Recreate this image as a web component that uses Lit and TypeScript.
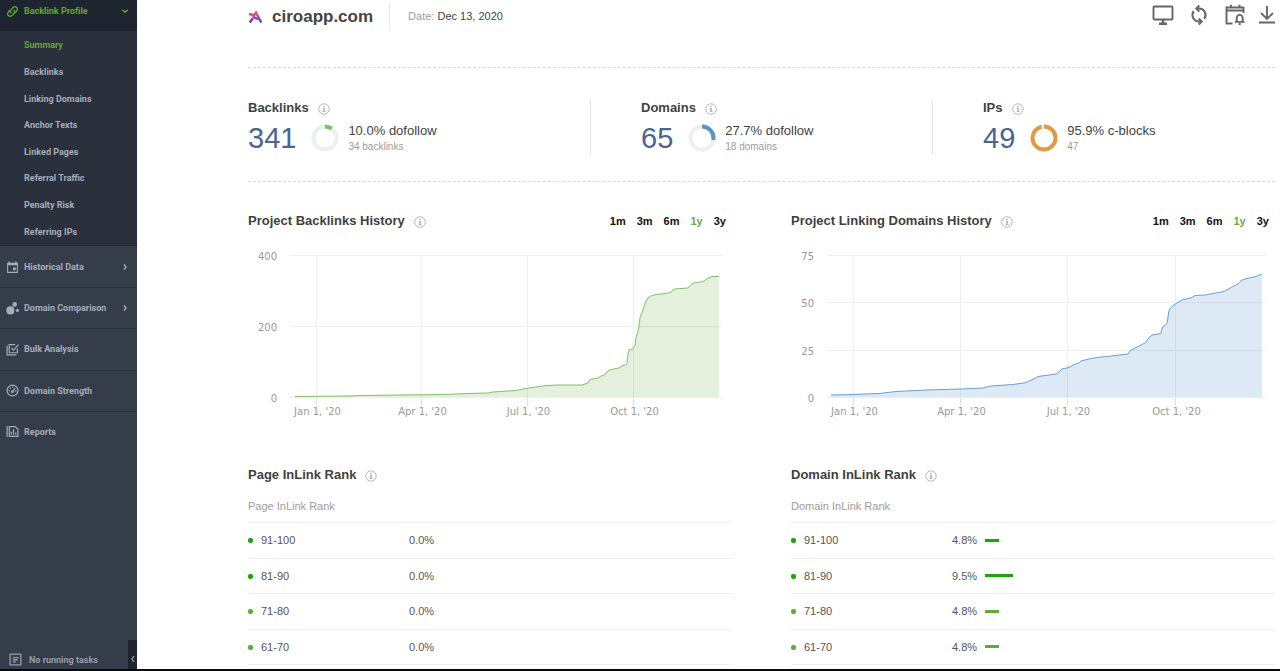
import { LitElement, html, svg, css } from "lit";
import { customElement, property, state } from "lit/decorators.js";
import { classMap } from "lit/directives/class-map.js";

const icons: Record<string, unknown> = {
  link: svg`<g fill="none" stroke="currentColor" stroke-width="2.400" stroke-linecap="round"><path d="M9.500 14.500c-2-2-1.500-4.500 0-6l3.500-4a4.600 4.600 0 0 1 6.600 0 4.600 4.600 0 0 1 0 6.600l-2.500 2.700"/><path d="M14.500 9.500c2 2 1.500 4.500 0 6l-3.500 4a4.600 4.600 0 0 1-6.600 0 4.600 4.600 0 0 1 0-6.600l2.500-2.700"/></g>`,
  calendar: svg`<path fill="currentColor" d="M18 12h-5v5h5v-5zM17 1v2H7V1H4.500v2H2v19h20V3h-2.500V1H17zm3 19H4V8h16v12z"/>`,
  bubbles: svg`<g fill="currentColor"><circle cx="8" cy="15.500" r="7.500"/><circle cx="16" cy="4.500" r="4.300"/><circle cx="21" cy="15.500" r="2.900"/></g>`,
  bulk: svg`<g fill="none" stroke="currentColor" stroke-width="2.200"><path d="M2 5v17h17"/><path d="M21 10v8H6V3h11"/><path d="M10 9l4 4 9-10"/></g>`,
  gauge: svg`<g fill="none" stroke="currentColor" stroke-width="2.200"><circle cx="12" cy="12" r="10"/><path d="M12 14l5-6"/></g><g fill="currentColor"><circle cx="11.500" cy="14.500" r="2.600"/><circle cx="6" cy="12" r="1.400"/><circle cx="8" cy="7.500" r="1.400"/><circle cx="12.500" cy="5.800" r="1.400"/><circle cx="18" cy="13" r="1.400"/></g>`,
  reports: svg`<g fill="none" stroke="currentColor" stroke-width="2.200"><path d="M2 2v20"/><path d="M6 3h11l5 5v13H6z"/><path d="M10 18v-6M14 18V8M18 18v-4"/></g>`,
  tasks: svg`<g fill="none" stroke="currentColor" stroke-width="2.400"><rect x="2" y="2" width="20" height="20" rx="1"/><path d="M7 8.500h11M7 12.500h9M7 16.500h6"/></g>`,
  down: svg`<path d="M4 9l8 6 8-6" fill="none" stroke="currentColor" stroke-width="4.500"/>`,
  right: svg`<path d="M9 4l6 8-6 8" fill="none" stroke="currentColor" stroke-width="4.500"/>`,
  left: svg`<path d="M15 3l-6 9 6 9" fill="none" stroke="currentColor" stroke-width="3.500"/>`,
  info: svg`<circle cx="12" cy="12" r="10.500" fill="none" stroke="currentColor" stroke-width="1.800"/><path fill="currentColor" d="M10.500 5.500h3v3h-3zM9.500 10h4.200v6h1.300v2H9.500v-2h1.200v-4H9.500z"/>`,
  monitor: svg`<g fill="none" stroke="currentColor" stroke-width="1.900"><rect x="2.500" y="3.500" width="19" height="13" rx="1"/><path d="M12 17v3.500M8 20.700h8" stroke-width="2.400"/></g>`,
  sync: svg`<g fill="none" stroke="currentColor" stroke-width="2"><path d="M9.500 5.500H12a6.500 6.500 0 0 1 5.300 10.300M18.500 12v0"/><path d="M14.500 18.500H12A6.500 6.500 0 0 1 6.700 8.200"/><path d="M12.300 2.500L9.300 5.500l3 3M11.700 15.500l3 3-3 3"/></g>`,
  schedule: svg`<g fill="none" stroke="currentColor" stroke-width="1.900"><path d="M9.500 20.500H3.500V4.500h17v5.500M3.500 7.500H20.500M8 1.800v3M16.500 1.800v3"/><path d="M13.700 18.700v-3.500a3 3.300 0 0 1 6 0v3.500M12 18.900h9.500M16.700 11v1.200M15.700 21h2"/></g>`,
  download: svg`<g fill="none" stroke="currentColor" stroke-width="1.900"><path d="M12 3v12.500M6 10l6 6 6-6M4 19.500h16"/></g>`,
};

const icon = (name: string, cls = "icon", box = "0 0 24 24") =>
  html`<svg class=${cls} viewBox=${box} aria-hidden="true">${icons[name]}</svg>`;

const infoButton = () =>
  html`<button class="info" type="button" aria-label="More information">${icon("info")}</button>`;

const shared = css`
  * { box-sizing: border-box; }
  svg { display: block; }
  h1, h2, p, ul { margin: 0; padding: 0; }
  ul { list-style: none; }
  button { padding: 0; border: 0; background: none; color: inherit; font: inherit; cursor: pointer; }
  a { color: inherit; text-decoration: none; }
  h2 { font-size: 13px; line-height: 16px; font-weight: 700; color: #3f3f3f; }
  .heading { display: flex; align-items: center; gap: 9px; }
  .info { color: #b3b3b3; }
  .info .icon { width: 12px; height: 12px; margin-top: 1px; }
`;

@customElement("side-nav")
class SideNav extends LitElement {
  static styles = [shared, css`
    :host {
      display: flex; flex-direction: column; background: #363d4a; color: #a4adbb;
      font: 700 9px/12px Roboto, "Liberation Sans", sans-serif;
    }
    .icon { width: 13px; height: 13px; }
    .arrow { width: 8px; height: 8px; margin-left: auto; }
    .profile { display: flex; height: 31px; padding: 0 8px 9px 6px; align-items: center; gap: 5px; background: #1f2530; color: #62a830; text-align: left; }
    .pages { display: grid; grid-auto-rows: 1fr; align-items: center; height: 215px; padding: 1px 0 0 24px; background: #2a303c; border-bottom: 1px dotted #1f2530; }
    .current { color: #62a830; }
    .sections { display: grid; grid-auto-rows: 1fr; height: 206px; }
    .sections li { border-top: 1px solid #2b323e; display: grid; }
    .sections li:first-child { border-top-color: #363d4a; }
    .section { display: flex; align-items: center; gap: 5px; padding: 0 8px 0 6px; }
    .footer { display: flex; justify-content: space-between; margin-top: auto; }
    .status { display: flex; align-items: center; gap: 7px; padding: 10px 0 0 9px; color: #939cab; }
    .collapse { display: grid; place-items: center; width: 9px; height: 29px; padding-top: 8px; background: #1f2530; }
    .collapse .icon { width: 8px; height: 8px; }
  `];

  render() {
    const pages = ["Summary", "Backlinks", "Linking Domains", "Anchor Texts", "Linked Pages", "Referral Traffic", "Penalty Risk", "Referring IPs"];
    const sections: [string, string, boolean][] = [
      ["calendar", "Historical Data", true],
      ["bubbles", "Domain Comparison", true],
      ["bulk", "Bulk Analysis", false],
      ["gauge", "Domain Strength", false],
      ["reports", "Reports", false],
    ];
    return html`
      <button class="profile" type="button" aria-expanded="true">
        ${icon("link")}<span>Backlink Profile</span>${icon("down", "arrow")}
      </button>
      <ul class="pages">
        ${pages.map((p, i) => html`<li><a href="#" class=${classMap({ current: i === 0 })}>${p}</a></li>`)}
      </ul>
      <ul class="sections">
        ${sections.map(([ic, label, more]) => html`
          <li><a class="section" href="#">${icon(ic)}<span>${label}</span>${more ? icon("right", "arrow") : ""}</a></li>`)}
      </ul>
      <div class="footer">
        <div class="status">${icon("tasks")}<span>No running tasks</span></div>
        <button class="collapse" type="button" aria-label="Collapse menu">${icon("left")}</button>
      </div>`;
  }
}

@customElement("stat-card")
class StatCard extends LitElement {
  @property() label = "";
  @property() value = "";
  @property({ type: Number }) percent = 0;
  @property() kind = "";
  @property() detail = "";
  @property() color = "";

  static styles = [shared, css`
    :host { display: block; }
    .body { display: flex; align-items: center; height: 36px; margin-top: 4px; }
    .value { font-size: 29px; line-height: 34px; color: #4a6591; }
    .ring { width: 28px; height: 28px; margin: 0 9px 0 15px; }
    .kind { font-size: 13px; line-height: 16px; color: #3f3f3f; }
    .detail { margin-top: 1px; font-size: 10px; line-height: 14px; color: #9c9c9c; }
  `];

  render() {
    const length = 2 * Math.PI * 11.5;
    return html`
      <div class="heading"><h2>${this.label}</h2>${infoButton()}</div>
      <div class="body">
        <span class="value">${this.value}</span>
        <svg class="ring" viewBox="0 0 28 28" fill="none" stroke-width="4" aria-hidden="true">
          <circle cx="14" cy="14" r="11.500" stroke="#edf0f0"/>
          <circle cx="14" cy="14" r="11.500" stroke=${this.color} transform="rotate(-90 14 14)"
            stroke-dasharray="${(length * this.percent) / 100} ${length}"/>
        </svg>
        <div>
          <p class="kind">${this.percent.toFixed(1)}% ${this.kind}</p>
          <p class="detail">${this.detail}</p>
        </div>
      </div>`;
  }
}

interface Series {
  title: string;
  ticks: number[];
  labelX: number;
  grid: [number, number];
  dates: number[];
  line: string;
  stroke: string;
  fill: string;
}

@customElement("history-chart")
class HistoryChart extends LitElement {
  @property({ attribute: false }) series!: Series;
  @state() private range = "1y";

  static styles = [shared, css`
    :host { display: block; min-width: 0; }
    .top { display: flex; justify-content: space-between; align-items: center; height: 20px; }
    .ranges { display: flex; gap: 11px; padding-right: 6px; font-size: 11px; line-height: 16px; font-weight: 700; color: #111; }
    .on { color: #6aa84a; }
    .chart { width: 100%; height: auto; margin-top: 13px; }
    text { font: 10px "DejaVu Sans", sans-serif; fill: #999; }
    .grid { stroke: #eee; }
    .tick { stroke: #d5e0f0; }
  `];

  render() {
    const s = this.series;
    const names = ["Jan 1, '20", "Apr 1, '20", "Jul 1, '20", "Oct 1, '20"];
    const points = s.line.split(" ");
    const first = points[0].split(",")[0];
    const last = points[points.length - 1].split(",")[0];
    const y = (i: number) => Math.round(11 + (i * 142) / (s.ticks.length - 1)) + 0.5;
    return html`
      <div class="top">
        <div class="heading"><h2>${s.title}</h2>${infoButton()}</div>
        <div class="ranges">
          ${["1m", "3m", "6m", "1y", "3y"].map((r) => html`
            <button type="button" class=${classMap({ on: r === this.range })} @click=${() => (this.range = r)}>${r}</button>`)}
        </div>
      </div>
      <svg class="chart" viewBox="0 0 484 176" role="img" aria-label=${s.title}>
        ${s.ticks.map((t, i) => svg`
          <text x=${s.labelX} y=${y(i) + 4} text-anchor="end">${t}</text>
          <line class="grid" x1=${s.grid[0]} x2=${s.grid[1]} y1=${y(i)} y2=${y(i)}/>`)}
        ${s.dates.map((x, i) => svg`
          <line class="grid" x1=${x} x2=${x} y1="11" y2="153"/>
          <line class="tick" x1=${x} x2=${x} y1="154" y2="162"/>
          <text x=${x + 1} y="171" text-anchor="middle">${names[i]}</text>`)}
        <polygon points="${first},153 ${s.line} ${last},153" fill=${s.fill}/>
        <polyline points=${s.line} fill="none" stroke=${s.stroke}/>
      </svg>`;
  }
}

@customElement("rank-table")
class RankTable extends LitElement {
  @property() label = "";
  @property({ attribute: false }) values: number[] = [];

  static styles = [shared, css`
    :host { display: block; min-width: 0; }
    table { width: 100%; margin-top: 7px; border-collapse: collapse; table-layout: fixed; font-size: 11px; line-height: 14px; color: #555; }
    th { height: 32px; padding: 0; font-weight: 400; text-align: left; color: #9c9c9c; }
    td { height: 35px; padding: 0; }
    tr:nth-child(odd) td { height: 36px; }
    tr { border-bottom: 1px solid #efefef; }
    .range { width: 161px; }
    .cell { display: flex; align-items: center; gap: 8px; }
    .dot { width: 5px; height: 5px; margin-top: 1px; border-radius: 2px; background: currentColor; }
    .bar { height: 3px; background: currentColor; }
    .strong { color: #1fa30c; }
    .mild { color: #62ab33; }
  `];

  render() {
    const ranges = ["91-100", "81-90", "71-80", "61-70"];
    return html`
      <div class="heading"><h2>${this.label}</h2>${infoButton()}</div>
      <table>
        <colgroup><col class="range"><col></colgroup>
        <thead><tr><th colspan="2" scope="col">${this.label}</th></tr></thead>
        <tbody>
          ${ranges.map((r, i) => {
            const tone = i < 2 ? "strong" : "mild";
            const v = this.values[i];
            return html`<tr>
              <td><div class="cell"><span class="dot ${tone}"></span>${r}</div></td>
              <td><div class="cell">${v.toFixed(1)}%${v ? html`<span class="bar ${tone}" style="width:${Math.round(v * 2.9)}px"></span>` : ""}</div></td>
            </tr>`;
          })}
        </tbody>
      </table>`;
  }
}

const backlinks: Series = {
  title: "Project Backlinks History",
  ticks: [400, 200, 0],
  labelX: 29,
  grid: [42, 475],
  dates: [68.5, 173.5, 279.5, 385.5],
  line: "47,152.500 100,152 112,151.500 195,150.500 220,149.500 240,149 245,148 268,146.500 275,145 279,144.500 284,143.500 291,142.500 298,141.500 310,141 334,141 340,139 342,135.500 350,134 353,132 356,131.500 360,127 363,125.500 371,124 374,122 377,121 379,119.500 380,110 381,106 385,104.500 387,101.500 388,93.500 390,87 391,82 392,73.500 394,68.500 396,62.500 398,57.500 400,54 403,52 408,50.500 418,49.500 424,47.500 426,45 440,44 442,41.500 446,39 450,38.500 456,37 460,34 464,32.500 471,32.500",
  stroke: "#86bf6a",
  fill: "rgba(106, 168, 60, 0.18)",
};

const domains: Series = {
  title: "Project Linking Domains History",
  ticks: [75, 50, 25, 0],
  labelX: 23,
  grid: [37, 474],
  dates: [62.5, 169.5, 276.5, 384.5],
  line: "40,151 62,150.500 88,149.500 105,147.500 135,146 170,145 192,144 200,142 222,140.500 236,138.500 238,137 244,134.500 247,132.500 265,130 268,128 271,125 278,123.500 282,121 288,119 290,117 298,115 306,113.500 320,112 337,110 339,107 341,105.500 355,98.500 357,95 361,91 370,89.500 371,84 376,79.500 377,73 378,66.500 380,63.500 385,59.500 391,56 401,53.500 404,51.500 414,51 433,47.500 440,43.500 447,40 451,36 456,34.500 465,32.500 468,31 471,30.500",
  stroke: "#6b9fd3",
  fill: "rgba(90, 145, 210, 0.2)",
};

@customElement("app-root")
class AppRoot extends LitElement {
  static styles = [shared, css`
    :host {
      display: grid; grid-template-columns: 137px minmax(0, 1fr); height: 100vh; overflow: hidden;
      border-bottom: 2px solid #090a0d; background: #fff; color: #3f3f3f; box-sizing: border-box;
      font: 11px/14px "Liberation Sans", Arial, sans-serif;
    }
    .content { padding: 0 5px 0 111px; overflow: hidden; }
    .header { display: flex; align-items: flex-start; height: 68px; padding-top: 3px; border-bottom: 1px dashed #d9d9d9; }
    .site { display: flex; align-items: center; gap: 9px; height: 27px; padding-right: 16px; border-right: 1px solid #e8e8e8; }
    .logo { width: 15px; height: 15px; }
    h1 { font-size: 17px; line-height: 24px; font-weight: 700; color: #444; }
    .date { padding-left: 18px; line-height: 27px; }
    .muted { color: #9c9c9c; }
    .tools { display: flex; gap: 12px; margin-left: auto; color: #666; }
    .tools .icon { width: 24px; height: 24px; }
    .tools .narrow { width: 16px; height: 24px; }
    .stats { display: grid; grid-template-columns: 342fr 342fr 343fr; padding: 32px 0 27px; border-bottom: 1px dashed #d9d9d9; }
    stat-card { height: 54px; }
    stat-card + stat-card { border-left: 1px solid #e2e2e2; padding-left: 50px; }
    .pair { display: grid; grid-template-columns: 1fr 1fr; gap: 59px; }
    .charts { padding-top: 29px; }
    .ranks { padding-top: 47px; }
  `];

  render() {
    const tools: [string, string][] = [["monitor", "Live view"], ["sync", "Update"], ["schedule", "Schedule"]];
    return html`
      <side-nav></side-nav>
      <main class="content">
        <header class="header">
          <div class="site">
            <svg class="logo" viewBox="0 0 15 15" aria-hidden="true">
              <defs><linearGradient id="g" gradientUnits="userSpaceOnUse" x1="0" y1="2" x2="0" y2="14"><stop offset="0" stop-color="#f0643c"/><stop offset=".5" stop-color="#b04a9a"/><stop offset="1" stop-color="#4a2cf0"/></linearGradient></defs>
              <g fill="none" stroke="url(#g)" stroke-width="2.400"><path d="M5.500 7L8 3.500 13.200 13.500"/><path d="M1 5l3 .5 3 3.500 3.500 1"/><path d="M5 9L1.800 13.500"/></g>
            </svg>
            <h1>ciroapp.com</h1>
          </div>
          <div class="date"><span class="muted">Date:</span> Dec 13, 2020</div>
          <div class="tools">
            ${tools.map(([ic, label]) => html`<button type="button" aria-label=${label}>${icon(ic)}</button>`)}
            <button type="button" aria-label="Download">${icon("download", "narrow", "4 0 16 24")}</button>
          </div>
        </header>
        <section class="stats">
          <stat-card label="Backlinks" value="341" percent="10" kind="dofollow" detail="34 backlinks" color="#7fbf5f"></stat-card>
          <stat-card label="Domains" value="65" percent="27.7" kind="dofollow" detail="18 domains" color="#5b93c9"></stat-card>
          <stat-card label="IPs" value="49" percent="95.9" kind="c-blocks" detail="47" color="#e09a45"></stat-card>
        </section>
        <section class="pair charts">
          <history-chart .series=${backlinks}></history-chart>
          <history-chart .series=${domains}></history-chart>
        </section>
        <section class="pair ranks">
          <rank-table label="Page InLink Rank" .values=${[0, 0, 0, 0]}></rank-table>
          <rank-table label="Domain InLink Rank" .values=${[4.8, 9.5, 4.8, 4.8]}></rank-table>
        </section>
      </main>`;
  }
}
